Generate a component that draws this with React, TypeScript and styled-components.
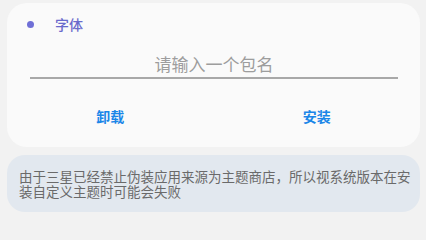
import React from 'react'
import styled, { createGlobalStyle } from 'styled-components'

const GlobalStyle = createGlobalStyle`
    html, body {
        margin: 0;
        padding: 0;
        background: #f2f2f2;
        font-family: "Noto Sans CJK SC", "Noto Sans", sans-serif;
    }
`

const Page = styled.main`
    display: flex;
    flex-direction: column;
    gap: 8px;
    padding: 3px 6px 0 7px;
`

const Card = styled.section`
    background: #fafafa;
    border-radius: 20px;
    padding: 11px 0 13px;
    display: flex;
    flex-direction: column;
`

const Header = styled.div`
    display: flex;
    align-items: center;
    height: 20px;
    padding-left: 19.5px;
    gap: 21.5px;
`

const Dot = styled.span`
    width: 7px;
    height: 7px;
    border-radius: 50%;
    background: #6f6fd6;
`

const Title = styled.span`
    font-size: 14px;
    color: #6a6acc;
    font-weight: 500;
`

const Field = styled.input`
    margin: 15px 22px 0 23px;
    height: 28px;
    padding: 0;
    border: none;
    border-bottom: 2px solid #a8a8a8;
    background: transparent;
    outline: none;
    text-align: center;
    font-family: inherit;
    font-size: 17px;
    color: #333;

    &::placeholder {
        color: #9d9d9d;
    }
`

const Actions = styled.div`
    display: flex;
    margin-top: 19px;
`

const Action = styled.button`
    flex: 1;
    height: 36px;
    border: none;
    background: transparent;
    font-family: inherit;
    font-size: 14px;
    font-weight: 700;
    color: #1a86e8;
    cursor: pointer;
`

const Notice = styled.p`
    margin: 0;
    background: #e2e8ef;
    border-radius: 18px;
    padding: 13.5px 8px 13.5px 12px;
    font-size: 13.5px;
    line-height: 15px;
    color: #6a6a6a;
`

const App = () => {
  return (
    <>
      <GlobalStyle />
      <Page>
        <Card>
          <Header>
            <Dot />
            <Title>字体</Title>
          </Header>
          <Field placeholder="请输入一个包名" />
          <Actions>
            <Action>卸载</Action>
            <Action>安装</Action>
          </Actions>
        </Card>
        <Notice>
          由于三星已经禁止伪装应用来源为主题商店，所以视系统版本在安装自定义主题时可能会失败
        </Notice>
      </Page>
    </>
  )
}

export default App
